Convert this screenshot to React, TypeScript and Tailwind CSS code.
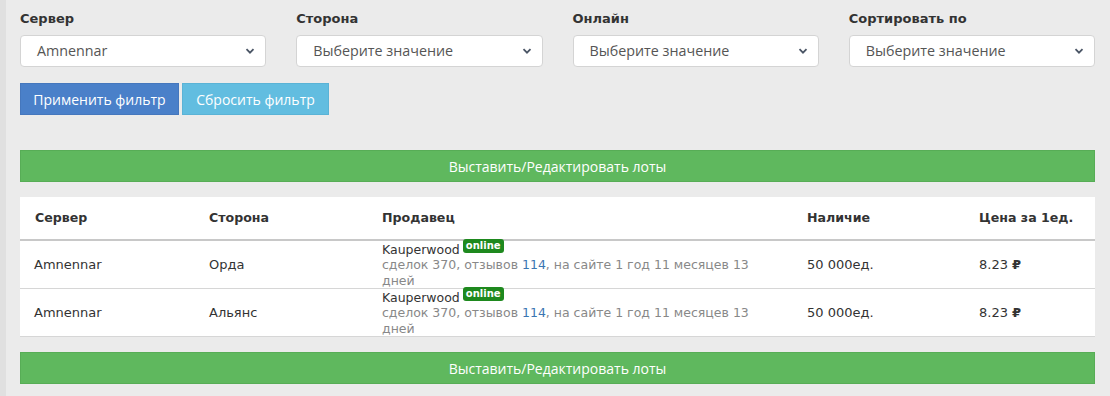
const filters = [
  { label: 'Сервер', value: 'Amnennar' },
  { label: 'Сторона', value: 'Выберите значение' },
  { label: 'Онлайн', value: 'Выберите значение' },
  { label: 'Сортировать по', value: 'Выберите значение' },
];

const rows = [
  { server: 'Amnennar', side: 'Орда', stock: '50 000ед.', price: '8.23' },
  { server: 'Amnennar', side: 'Альянс', stock: '50 000ед.', price: '8.23' },
];

function Chevron() {
  return (
    <svg width="10" height="10" viewBox="0 0 10 10" className="text-gray-600">
      <path d="M1.5 3.2 L5 6.7 L8.5 3.2" fill="none" stroke="currentColor" strokeWidth="1.8" />
    </svg>
  );
}

function GreenBar() {
  return (
    <div className="h-8 bg-[#5fb85e] border border-[#57ad56] flex items-center justify-center text-white text-[14px] font-['Open_Sans',sans-serif]">
      Выставить/Редактировать лоты
    </div>
  );
}

export default function App() {
  return (
    <div className="w-[1110px] h-[396px] bg-[#ebebeb] flex overflow-hidden">
      <div className="w-[6px] bg-[#e0e0e0]" />
      <div className="flex-1 pl-[14px] pr-[15px] pt-[11px]">
        <div className="grid grid-cols-4 gap-x-[30px]">
          {filters.map((f) => (
            <div key={f.label}>
              <div className="text-[13px] font-bold text-[#333] font-['DejaVu_Sans',sans-serif] h-[16px] leading-[16px]">
                {f.label}
              </div>
              <div className="mt-[8px] h-[32px] bg-white border border-[#d4d4d4] rounded-[4px] flex items-center justify-between pl-[16px] pr-[10px] font-['Open_Sans',sans-serif] text-[14.3px] text-[#555]">
                <span>{f.value}</span>
                <Chevron />
              </div>
            </div>
          ))}
        </div>

        <div className="flex gap-[3px] mt-[16px] font-['Open_Sans',sans-serif] text-[14px] text-white">
          <div className="h-[32px] w-[159px] bg-[#4a80c9] border border-[#4577bd] flex items-center justify-center">
            Применить фильтр
          </div>
          <div className="h-[32px] w-[147px] bg-[#62bde0] border border-[#5ab3d6] flex items-center justify-center">
            Сбросить фильтр
          </div>
        </div>

        <div className="mt-[35px]">
          <GreenBar />
        </div>

        <div className="mt-[15px] bg-white font-['DejaVu_Sans',sans-serif] text-[13px] text-[#333]">
          <div className="flex h-[44px] items-center font-bold text-[12.6px] border-b-2 border-[#c8c8c8]">
            <div className="w-[174px] pl-[15px]">Сервер</div>
            <div className="w-[173px] pl-[15px]">Сторона</div>
            <div className="w-[425px] pl-[15px]">Продавец</div>
            <div className="w-[172px] pl-[15px]">Наличие</div>
            <div className="flex-1 pl-[15px]">Цена за 1ед.</div>
          </div>
          {rows.map((r, i) => (
            <div key={i} className="flex h-[48px] items-center border-b border-[#d6d6d6]">
              <div className="w-[174px] pl-[14px]">{r.server}</div>
              <div className="w-[173px] pl-[15px]">{r.side}</div>
              <div className="w-[425px] pl-[15px] text-[12.5px] leading-[16px]">
                <div className="flex items-start h-[16px]">
                  <span className="pt-[1px]">Kauperwood</span>
                  <span className="ml-[3px] bg-[#1e891e] text-white text-[10px] font-bold rounded-[3px] px-[3px] leading-[14px] h-[14px] -mt-[2px]">
                    online
                  </span>
                </div>
                <div className="text-[#888] w-[372px]">
                  сделок 370, отзывов <span className="text-[#3b76b2]">114</span>, на сайте 1 год 11 месяцев 13 дней
                </div>
              </div>
              <div className="w-[172px] pl-[15px]">{r.stock}</div>
              <div className="flex-1 pl-[15px]">
                {r.price} <span className="font-bold">₽</span>
              </div>
            </div>
          ))}
        </div>

        <div className="mt-[15px]">
          <GreenBar />
        </div>
      </div>
    </div>
  );
}
